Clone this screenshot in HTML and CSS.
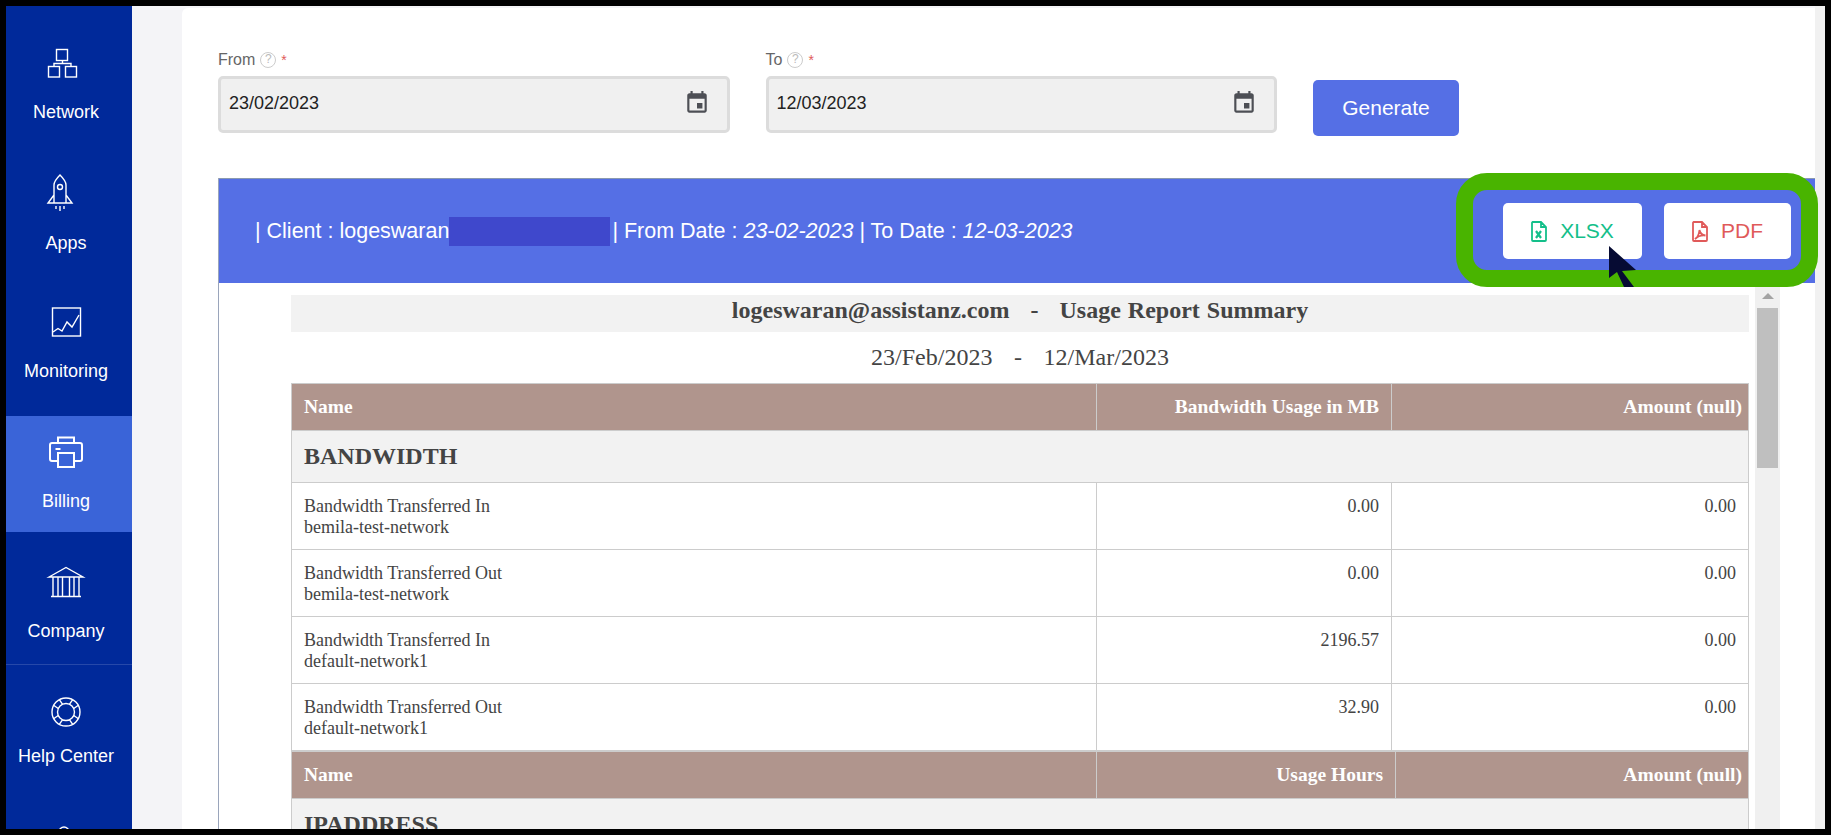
FILE: index.html
```html
<!DOCTYPE html>
<html lang="en">
<head>
    <meta charset="UTF-8">
    <meta name="viewport" content="width=device-width, initial-scale=1.0">
    <title>Usage Report</title>
    <link rel="stylesheet" href="styles.css">
</head>
<body>
    <div class="page">
        <nav class="sidebar">
            <a class="nav-item network">
                <svg class="nav-icon" viewBox="0 0 48 32"><rect x="14.5" y="3.5" width="11" height="11"/><rect x="6.5" y="20.5" width="11" height="10.5"/><rect x="23.5" y="20.5" width="11" height="10.5"/><path d="M20.5 14.5V17.5M12 20.5V17.5H29V20.5"/></svg>
                <span class="nav-label">Network</span>
            </a>
            <a class="nav-item apps">
                <svg class="nav-icon" viewBox="0 0 48 32"><path d="M12 27V9C12 5 15 2 18 -1C21 2 24 5 24 9V27M12 19L6 27H30L24 19M14 30v3M18 30v5M22 30v3"/><circle cx="18" cy="11" r="2.5"/></svg>
                <span class="nav-label">Apps</span>
            </a>
            <a class="nav-item">
                <svg class="nav-icon" viewBox="0 0 48 32"><rect x="10.5" y="2" width="28" height="28"/><path d="M11 26L16 22.5L20 25L25 16L30 21L37 9"/></svg>
                <span class="nav-label">Monitoring</span>
            </a>
            <a class="nav-item active">
                <svg class="nav-icon heavy" viewBox="0 0 48 32"><path d="M16 7V1.5H32V7M16 25H10a2 2 0 0 1-2-2V9a2 2 0 0 1 2-2H38a2 2 0 0 1 2 2V23a2 2 0 0 1-2 2H32"/><rect x="16" y="17" width="16" height="14"/><path d="M13.500 13h5"/></svg>
                <span class="nav-label">Billing</span>
            </a>
            <a class="nav-item company">
                <svg class="nav-icon" viewBox="0 0 48 32"><path d="M7 11L24 1.5L41 11ZM11 11V30M16 11V30M20.500 11V30M27.500 11V30M32 11V30M37 11V30M9 30.500H39"/></svg>
                <span class="nav-label">Company</span>
            </a>
            <div class="nav-rule"></div>
            <a class="nav-item help">
                <svg class="nav-icon" viewBox="0 0 48 32">
                    <circle cx="24" cy="16" r="14"/><circle cx="24" cy="16" r="8.5"/>
                    <path transform="translate(24 16) rotate(45)" d="M-3 -8L-4 -13.5M3 -8L4 -13.5"/>
                    <path transform="translate(24 16) rotate(135)" d="M-3 -8L-4 -13.5M3 -8L4 -13.5"/>
                    <path transform="translate(24 16) rotate(225)" d="M-3 -8L-4 -13.5M3 -8L4 -13.5"/>
                    <path transform="translate(24 16) rotate(315)" d="M-3 -8L-4 -13.5M3 -8L4 -13.5"/>
                </svg>
                <span class="nav-label">Help Center</span>
            </a>
            <a class="nav-item more">
                <svg class="nav-icon" viewBox="0 0 48 32"><circle cx="22" cy="6" r="5"/></svg>
            </a>
        </nav>

        <div class="gutter"></div>

        <main class="panel">
            <div class="filters">
                <div class="field">
                    <label class="field-label">From <span class="hint">?</span> <span class="req">*</span></label>
                    <div class="date-input">
                        <span>23/02/2023</span>
                        <svg class="cal-icon" viewBox="0 0 24 24"><path d="M17 12h-5v5h5v-5zM16 1v2H8V1H6v2H5c-1.11 0-1.99.9-1.99 2L3 19c0 1.1.89 2 2 2h14c1.1 0 2-.9 2-2V5c0-1.1-.9-2-2-2h-1V1h-2zm3 18H5V8h14v11z"/></svg>
                    </div>
                </div>
                <div class="field">
                    <label class="field-label">To <span class="hint">?</span> <span class="req">*</span></label>
                    <div class="date-input">
                        <span>12/03/2023</span>
                        <svg class="cal-icon" viewBox="0 0 24 24"><path d="M17 12h-5v5h5v-5zM16 1v2H8V1H6v2H5c-1.11 0-1.99.9-1.99 2L3 19c0 1.1.89 2 2 2h14c1.1 0 2-.9 2-2V5c0-1.1-.9-2-2-2h-1V1h-2zm3 18H5V8h14v11z"/></svg>
                    </div>
                </div>
                <button class="generate">Generate</button>
            </div>

            <section class="report">
                <div class="report-bar">
                    <div class="report-info">| Client : logeswaran<span class="redacted"></span>| From Date : <em>23-02-2023</em> | To Date : <em>12-03-2023</em></div>
                    <div class="export">
                        <button class="export-btn xlsx">
                            <svg class="file-icon" viewBox="0 0 16 21"><path d="M1.500 1h8.500l5 5v13a1 1 0 0 1-1 1H2a1 1 0 0 1-1-1V2a1 1 0 0 1 .5-1zM10 1v5h5"/><path class="thick" d="M5 10l5 7M10 10l-5 7"/></svg>
                            XLSX
                        </button>
                        <button class="export-btn pdf">
                            <svg class="file-icon" viewBox="0 0 16 21"><path d="M1.500 1h8.500l5 5v13a1 1 0 0 1-1 1H2a1 1 0 0 1-1-1V2a1 1 0 0 1 .5-1zM10 1v5h5"/><path d="M3 18c2-1 4-5 4.500-9c.5 3 2.500 5 6 5.500c-4-.5-7.500 .5-10.500 3.500z"/></svg>
                            PDF
                        </button>
                    </div>
                    <div class="callout"></div>
                    <svg class="cursor" viewBox="0 0 28 41"><polygon points="0,0 27,24 13,25 25,41 15,41 8,26 0,32"/></svg>
                </div>

                <div class="report-frame">
                    <div class="report-doc">
                        <div class="doc-title">logeswaran@assistanz.com &nbsp; - &nbsp; Usage Report Summary</div>
                        <div class="doc-dates">23/Feb/2023 &nbsp; - &nbsp; 12/Mar/2023</div>

                        <table class="usage">
                            <colgroup><col class="col-name"><col class="col-value"><col class="col-amount"></colgroup>
                            <tr class="head"><th>Name</th><th class="num">Bandwidth Usage in MB</th><th class="num tight">Amount (null)</th></tr>
                            <tr class="group"><td colspan="3">BANDWIDTH</td></tr>
                            <tr class="line"><td>Bandwidth Transferred In<br>bemila-test-network</td><td class="num">0.00</td><td class="num">0.00</td></tr>
                            <tr class="line"><td>Bandwidth Transferred Out<br>bemila-test-network</td><td class="num">0.00</td><td class="num">0.00</td></tr>
                            <tr class="line"><td>Bandwidth Transferred In<br>default-network1</td><td class="num">2196.57</td><td class="num">0.00</td></tr>
                            <tr class="line"><td>Bandwidth Transferred Out<br>default-network1</td><td class="num">32.90</td><td class="num">0.00</td></tr>
                        </table>
                        <table class="usage second">
                            <colgroup><col class="col-name"><col class="col-hours"><col class="col-amount-b"></colgroup>
                            <tr class="head"><th>Name</th><th class="num">Usage Hours</th><th class="num tight">Amount (null)</th></tr>
                            <tr class="group"><td colspan="3">IPADDRESS</td></tr>
                        </table>
                    </div>
                    <div class="scroll-track">
                        <div class="scroll-arrow"></div>
                        <div class="scroll-thumb"></div>
                    </div>
                </div>
            </section>
        </main>

        <div class="page-track"></div>
    </div>
</body>
</html>
```
FILE: styles.css
```css
html, body {
    margin: 0;
    height: 100%;
    overflow: hidden;
    background: #000;
    font-family: "Liberation Sans", Arial, sans-serif;
}

.page {
    display: flex;
    margin: 6px 6px 0 6px;
    height: 823px;
    overflow: hidden;
    background: #f4f4f7;
}

/* sidebar */
.sidebar {
    flex: 0 0 126px;
    padding-top: 20px;
    box-sizing: border-box;
    background: #00299a;
    overflow: hidden;
    color: #fff;
}
.nav-item {
    display: block;
    box-sizing: border-box;
    width: 132px;
    height: 116px;
    margin: 0 0 14px -6px;
    padding-top: 20px;
    text-align: center;
}
.nav-item.active {
    background: #3a64d8;
}
.nav-item.company {
    margin-bottom: 2px;
}
.nav-item.help {
    height: auto;
    margin-bottom: 0;
    padding-top: 31px;
}
.nav-item.more {
    height: 40px;
    margin: 0 0 0 -6px;
    padding-top: 60px;
}
.nav-rule {
    height: 1px;
    background: rgba(255,255,255,0.15);
}
.nav-icon {
    display: block;
    width: 48px;
    height: 32px;
    margin: 0 auto;
    overflow: visible;
    fill: none;
    stroke: #fff;
    stroke-width: 1.4;
}
.nav-icon.heavy {
    stroke-width: 2;
}
.nav-label {
    display: block;
    margin-top: 23px;
    font-size: 18px;
    line-height: 20px;
}
.nav-item.network .nav-label {
    margin-top: 24px;
}
.nav-item.apps .nav-label {
    margin-top: 25px;
}
.nav-item.help .nav-label {
    margin-top: 18px;
}

.gutter {
    flex: 0 0 50px;
}

/* main panel */
.panel {
    flex: 1;
    min-width: 0;
    margin-top: 2px;
    padding: 42px 0 0 36px;
    background: #fff;
    border-top-left-radius: 6px;
}
.page-track {
    flex: 0 0 10px;
    background: #f1f1f1;
}

.filters {
    display: flex;
    align-items: flex-start;
    gap: 36px;
    height: 83px;
    margin-bottom: 45px;
}
.field {
    width: 511.5px;
}
.field-label {
    display: flex;
    align-items: center;
    gap: 5px;
    height: 20px;
    margin-bottom: 6px;
    font-size: 16px;
    color: #666;
}
.hint {
    box-sizing: border-box;
    width: 16px;
    height: 16px;
    border: 1.5px solid #ccc;
    border-radius: 50%;
    font-size: 12px;
    line-height: 13px;
    text-align: center;
    color: #bbb;
}
.req {
    color: #e05a5a;
    font-size: 14px;
}
.date-input {
    display: flex;
    align-items: center;
    justify-content: space-between;
    box-sizing: border-box;
    height: 57px;
    padding: 0 17px 3px 8px;
    background: #f0f0f0;
    border: 3px solid #dcdcdc;
    border-radius: 5px;
    font-size: 18px;
    color: #222;
}
.cal-icon {
    width: 26px;
    height: 26px;
    fill: #4d4f55;
}
.generate {
    flex: none;
    width: 146px;
    height: 56px;
    margin-top: 30px;
    background: #556fe5;
    border: none;
    border-radius: 5px;
    color: #fff;
    font-family: inherit;
    font-size: 21px;
}

/* report */
.report {
    border-left: 1px solid #9aa5bb;
}
.report-bar {
    position: relative;
    display: flex;
    align-items: center;
    justify-content: space-between;
    box-sizing: border-box;
    height: 105px;
    padding: 0 24px 0 36px;
    background: #556fe5;
    border-top: 1px solid #8a9ab0;
    color: #fff;
}
.report-info {
    display: flex;
    align-items: center;
    white-space: pre;
    font-size: 21.5px;
}
.report-info em {
    font-style: italic;
}
.redacted {
    display: inline-block;
    width: 161px;
    height: 29px;
    margin-right: 2px;
    background: #3f48cc;
}
.export {
    display: flex;
    gap: 22px;
}
.export-btn {
    display: flex;
    align-items: center;
    justify-content: center;
    gap: 13px;
    height: 56px;
    background: #fff;
    border: none;
    border-radius: 5px;
    font-family: inherit;
    font-size: 21px;
}
.export-btn.xlsx {
    width: 139px;
    color: #14bf8a;
}
.export-btn.pdf {
    width: 127px;
    color: #e05a5a;
}
.file-icon {
    width: 16px;
    height: 21px;
    fill: none;
    stroke: currentColor;
    stroke-width: 1.8;
}
.file-icon .thick {
    stroke-width: 2.2;
}
.callout {
    position: absolute;
    top: -6px;
    right: -3px;
    box-sizing: border-box;
    width: 362px;
    height: 114px;
    border: 17px solid #49b400;
    border-radius: 31px;
}
.cursor {
    position: absolute;
    top: 67px;
    left: 1390px;
    width: 28px;
    height: 41px;
    fill: #060b33;
}

.report-frame {
    display: flex;
    height: 546px;
    overflow: hidden;
    background: #fff;
}
.report-doc {
    flex: 0 0 1457px;
    margin-left: 72px;
    padding-top: 12px;
    font-family: "Liberation Serif", "Times New Roman", serif;
    color: #444;
}
.doc-title {
    height: 37px;
    background: #f2f2f2;
    font-size: 24px;
    font-weight: bold;
    line-height: 31px;
    text-align: center;
    white-space: pre;
    word-spacing: 1px;
}
.doc-dates {
    height: 51px;
    font-size: 24px;
    line-height: 50px;
    text-align: center;
    white-space: pre;
    word-spacing: 1.2px;
}

.usage {
    width: 1457px;
    table-layout: fixed;
    border-collapse: collapse;
    font-size: 18px;
}
.usage.second {
    margin-top: -1px;
    border-top: 2px solid #ccc;
}
.col-name { width: 805px; }
.col-value { width: 295px; }
.col-amount { width: 357px; }
.col-hours { width: 299px; }
.col-amount-b { width: 353px; }

.usage th, .usage td {
    padding: 0 12px;
    border: 1px solid #ccc;
    text-align: left;
}
.usage .num {
    text-align: right;
}
.usage .tight {
    padding-right: 6px;
}
.head th {
    height: 46px;
    background: #b0958d;
    color: #fff;
    font-size: 19.5px;
}
.group td {
    height: 51px;
    background: #f2f2f2;
    font-size: 24px;
    font-weight: bold;
}
.line td {
    height: 67px;
    padding-top: 13px;
    padding-bottom: 10px;
    box-sizing: border-box;
    line-height: 21px;
    vertical-align: top;
}

.scroll-track {
    flex: 0 0 25px;
    margin-left: 6px;
    padding-top: 10px;
    box-sizing: border-box;
    background: #f0f0f0;
}
.scroll-arrow {
    width: 0;
    margin: 0 auto;
    border: 6px solid transparent;
    border-top: 0;
    border-bottom: 6px solid #a3a3a3;
}
.scroll-thumb {
    width: 21px;
    height: 160px;
    margin: 9px 2px 0;
    background: #bfbfbf;
}
```
